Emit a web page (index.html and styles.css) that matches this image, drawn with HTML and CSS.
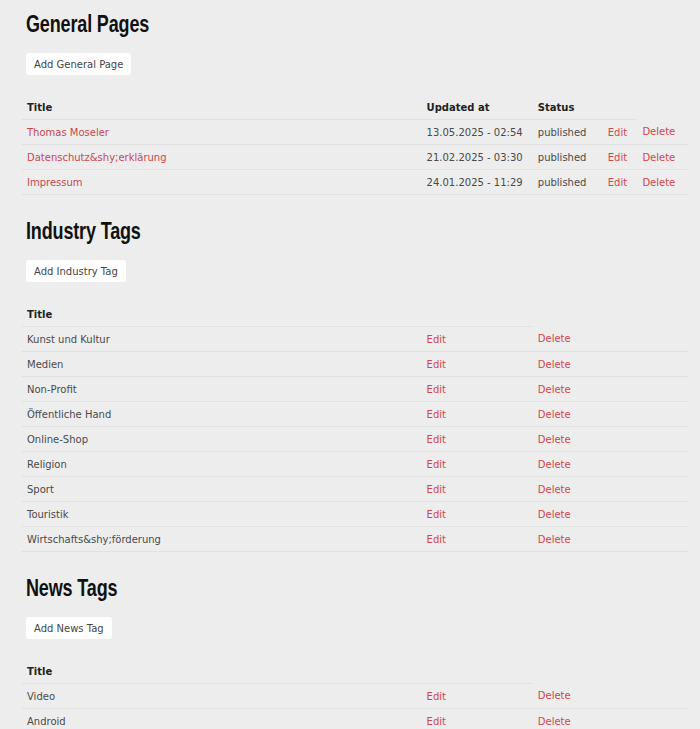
FILE: index.html
```html
<!DOCTYPE html>
<html lang="de">
  <head>
    <meta charset="UTF-8" />
    <meta name="viewport" content="width=device-width, initial-scale=1.0" />
    <title>Admin</title>
    <link rel="stylesheet" href="styles.css">
  </head>
  <body>
    <div class="main">
      <!-- General Pages -->
      <section class="block">
        <h2>General Pages</h2>
        <button class="add-btn">Add General Page</button>
        <table class="list">
          <thead>
            <tr>
              <th class="col-title">Title</th>
              <th class="col-date">Updated at</th>
              <th class="col-status">Status</th>
              <th></th>
            </tr>
          </thead>
          <tbody>
            <tr>
              <td><a href="#" class="title-link">Thomas Moseler</a></td>
              <td>13.05.2025 - 02:54</td>
              <td>published</td>
              <td><a href="#">Edit</a></td>
              <td><a href="#">Delete</a></td>
            </tr>
            <tr>
              <td><a href="#" class="title-link">Datenschutz&amp;shy;erklärung</a></td>
              <td>21.02.2025 - 03:30</td>
              <td>published</td>
              <td><a href="#">Edit</a></td>
              <td><a href="#">Delete</a></td>
            </tr>
            <tr>
              <td><a href="#" class="title-link">Impressum</a></td>
              <td>24.01.2025 - 11:29</td>
              <td>published</td>
              <td><a href="#">Edit</a></td>
              <td><a href="#">Delete</a></td>
            </tr>
          </tbody>
        </table>
      </section>

      <!-- Industry Tags -->
      <section class="block">
        <h2>Industry Tags</h2>
        <button class="add-btn">Add Industry Tag</button>
        <table class="list">
          <thead>
            <tr>
              <th class="col-title">Title</th>
              <th class="col-date"></th>
            </tr>
          </thead>
          <tbody>
            <tr><td>Kunst und Kultur</td><td><a href="#">Edit</a></td><td><a href="#">Delete</a></td></tr>
            <tr><td>Medien</td><td><a href="#">Edit</a></td><td><a href="#">Delete</a></td></tr>
            <tr><td>Non-Profit</td><td><a href="#">Edit</a></td><td><a href="#">Delete</a></td></tr>
            <tr><td>Öffentliche Hand</td><td><a href="#">Edit</a></td><td><a href="#">Delete</a></td></tr>
            <tr><td>Online-Shop</td><td><a href="#">Edit</a></td><td><a href="#">Delete</a></td></tr>
            <tr><td>Religion</td><td><a href="#">Edit</a></td><td><a href="#">Delete</a></td></tr>
            <tr><td>Sport</td><td><a href="#">Edit</a></td><td><a href="#">Delete</a></td></tr>
            <tr><td>Touristik</td><td><a href="#">Edit</a></td><td><a href="#">Delete</a></td></tr>
            <tr><td>Wirtschafts&amp;shy;förderung</td><td><a href="#">Edit</a></td><td><a href="#">Delete</a></td></tr>
          </tbody>
        </table>
      </section>

      <!-- News Tags -->
      <section class="block">
        <h2>News Tags</h2>
        <button class="add-btn">Add News Tag</button>
        <table class="list">
          <thead>
            <tr>
              <th class="col-title">Title</th>
              <th class="col-date"></th>
            </tr>
          </thead>
          <tbody>
            <tr><td>Video</td><td><a href="#">Edit</a></td><td><a href="#">Delete</a></td></tr>
            <tr><td>Android</td><td><a href="#">Edit</a></td><td><a href="#">Delete</a></td></tr>
          </tbody>
        </table>
      </section>
    </div>
  </body>
</html>
```

FILE: styles.css
```css
body {
  margin: 0;
  background: #ededed;
  font-family: "DejaVu Sans", sans-serif;
  font-size: 10px;
  color: #4a4a4a;
}
.main {
  padding: 0 12px 0 22px;
}
/* no condensed font installed, so squeeze a bold sans */
.block h2 {
  font-family: "Liberation Sans", Arial, sans-serif;
  font-weight: bold;
  font-size: 24px;
  letter-spacing: -0.2px;
  color: #111;
  margin: 0 0 0 4px;
  padding-top: 8px;
  line-height: 31px;
  transform: scaleX(0.75);
  transform-origin: left center;
}
.add-btn {
  display: block;
  margin: 14px 0 0 4px;
  height: 22px;
  padding: 0 8px;
  border: none;
  border-radius: 3px;
  background: #fff;
  font-family: "DejaVu Sans", sans-serif;
  font-size: 10px;
  color: #444;
}
/* tables */
.list {
  width: 100%;
  border-collapse: collapse;
  margin-top: 20px;
  margin-bottom: 12px;
}
.list th,
.list td {
  text-align: left;
  vertical-align: middle;
  padding: 0 5px;
  height: 24px;
  border-bottom: 1px solid #e1e1e1;
}
.list th {
  font-weight: bold;
  color: #222;
}
.col-title {
  width: 60%;
}
.col-date {
  width: 16.7%;
}
.col-status {
  width: 10.5%;
}
.list a {
  color: #d1464e;
  text-decoration: none;
}
.list a.title-link {
  color: #c8484f;
}
```
